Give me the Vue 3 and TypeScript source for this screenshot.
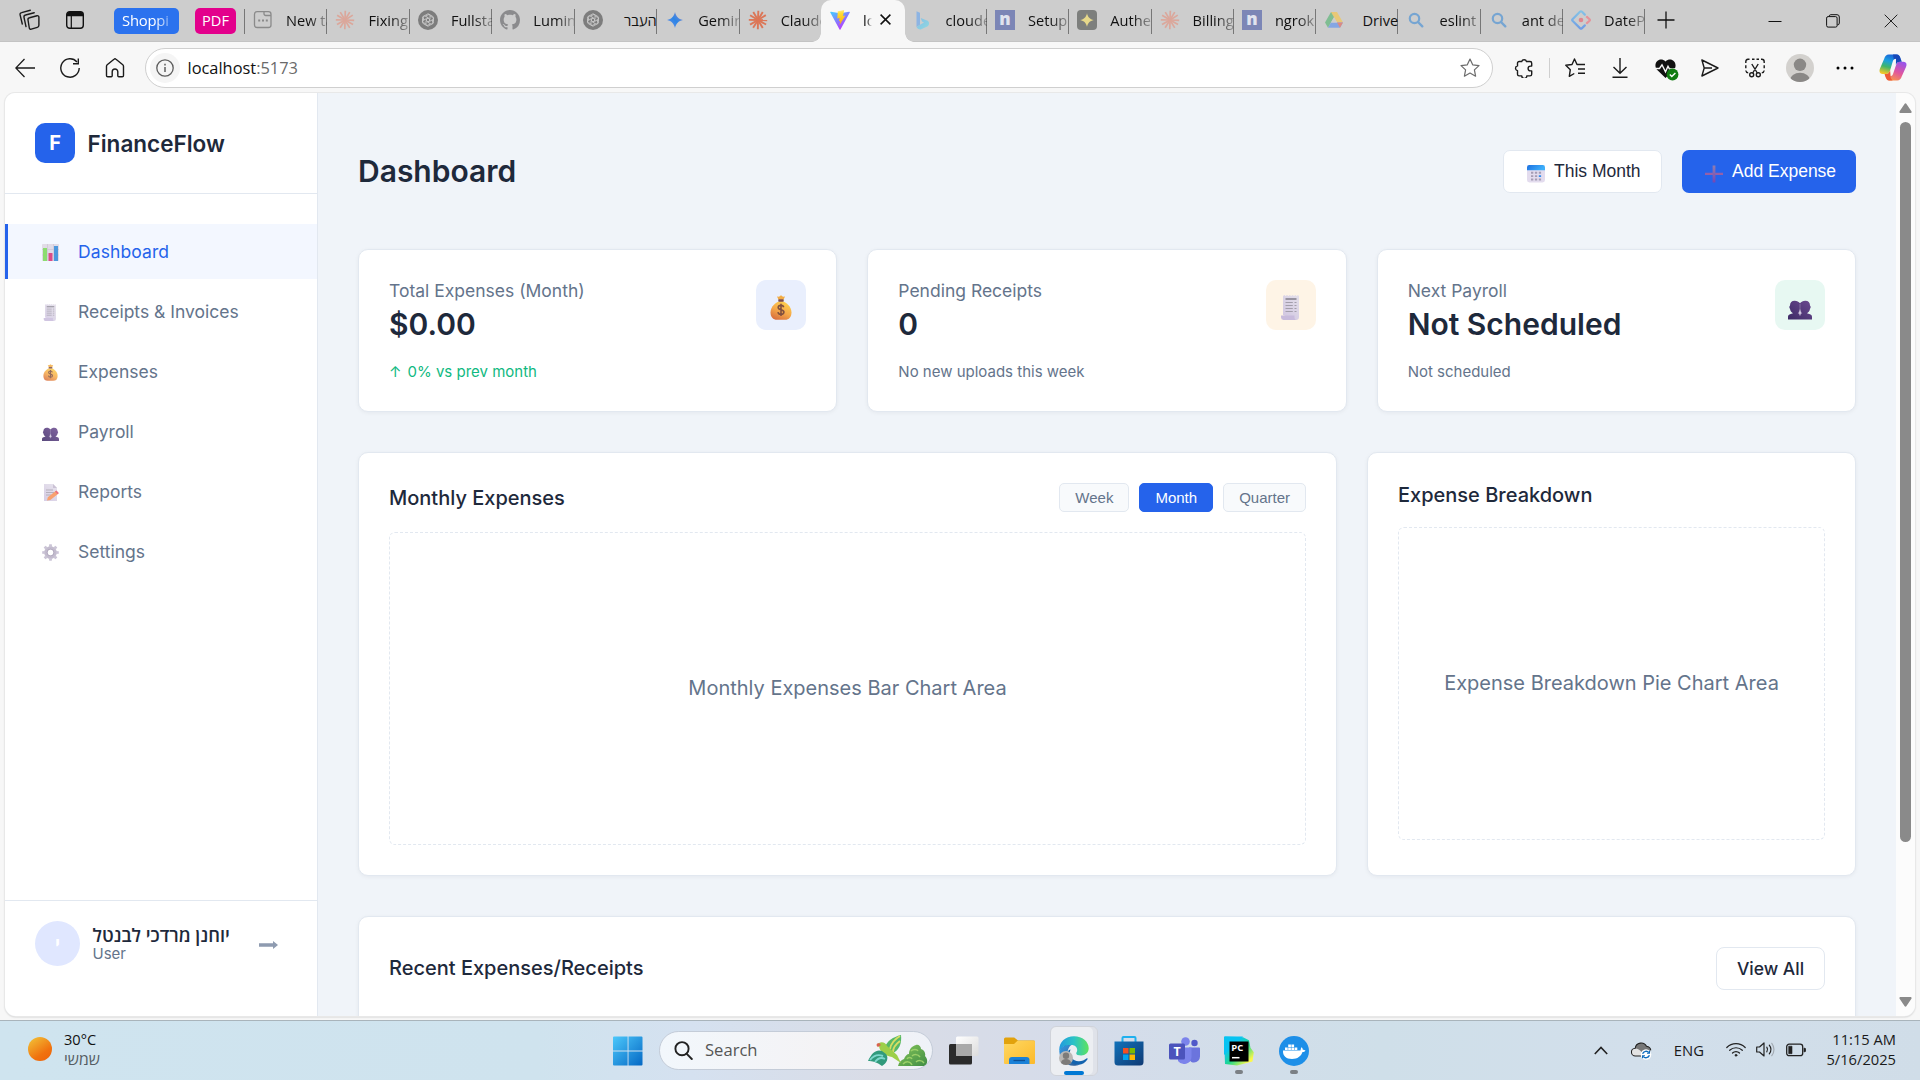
<script setup lang="ts">
interface Tab { icon: string; title: string; rtl?: boolean; active?: boolean }
interface NavItem { icon: string; label: string; active?: boolean }
interface Stat { title: string; value: string; note: string; icon: string; tone: string; up?: boolean }

const tabs: Tab[] = [
  { icon: 'newtab', title: 'New ta' },
  { icon: 'burst-dim', title: 'Fixing' },
  { icon: 'openai', title: 'Fullsta' },
  { icon: 'github', title: 'Lumin' },
  { icon: 'openai', title: 'העבר', rtl: true },
  { icon: 'gemini', title: 'Gemin' },
  { icon: 'burst', title: 'Claude' },
  { icon: 'vite', title: 'lo', active: true },
  { icon: 'bing', title: 'cloude' },
  { icon: 'ngrok', title: 'Setup' },
  { icon: 'auth', title: 'Authe' },
  { icon: 'burst-dim', title: 'Billing' },
  { icon: 'ngrok', title: 'ngrok' },
  { icon: 'drive', title: 'Drive', rtl: true },
  { icon: 'lens', title: 'eslint -' },
  { icon: 'lens', title: 'ant de' },
  { icon: 'antd', title: 'DateP' },
]

const nav: NavItem[] = [
  { icon: 'chart', label: 'Dashboard', active: true },
  { icon: 'receipt', label: 'Receipts & Invoices' },
  { icon: 'bag', label: 'Expenses' },
  { icon: 'people', label: 'Payroll' },
  { icon: 'memo', label: 'Reports' },
  { icon: 'gear', label: 'Settings' },
]

const stats: Stat[] = [
  { title: 'Total Expenses (Month)', value: '$0.00', note: '0% vs prev month', icon: 'bag', tone: 'blue', up: true },
  { title: 'Pending Receipts', value: '0', note: 'No new uploads this week', icon: 'receipt', tone: 'amber' },
  { title: 'Next Payroll', value: 'Not Scheduled', note: 'Not scheduled', icon: 'people', tone: 'green' },
]

const periods = ['Week', 'Month', 'Quarter']
const rays = [2, 31, 58, 92, 119, 149, 181, 212, 240, 271, 301, 329]
const petals = [0, 60, 120, 180, 240, 300]
</script>

<template>
  <svg class="sprite" aria-hidden="true">
    <defs>
      <linearGradient id="gBag" x1="0.8" y1="0" x2="0.3" y2="1"><stop offset="0" stop-color="#ffd54f" /><stop offset="0.55" stop-color="#f5a94a" /><stop offset="1" stop-color="#d9713f" /></linearGradient>
      <linearGradient id="gPeople" x1="1" y1="0" x2="0" y2="1"><stop offset="0" stop-color="#6c4a91" /><stop offset="1" stop-color="#3d2a66" /></linearGradient>
      <linearGradient id="gPaper" x1="1" y1="0" x2="0.3" y2="1"><stop offset="0" stop-color="#e4e0ea" /><stop offset="1" stop-color="#d2c8e2" /></linearGradient>
      <linearGradient id="gCal" x1="0" y1="0" x2="1" y2="0.3"><stop offset="0" stop-color="#1c6fe0" /><stop offset="1" stop-color="#3db0fb" /></linearGradient>
      <linearGradient id="gWin" x1="0" y1="0" x2="1" y2="1"><stop offset="0" stop-color="#4cc8fb" /><stop offset="1" stop-color="#0568c4" /></linearGradient>
      <linearGradient id="gGem" x1="0" y1="1" x2="1" y2="0"><stop offset="0" stop-color="#6f8fe8" /><stop offset="0.5" stop-color="#2c85e6" /><stop offset="1" stop-color="#8f86c9" /></linearGradient>
      <linearGradient id="gViteA" x1="0" y1="0" x2="0.6" y2="1"><stop offset="0" stop-color="#41d1ff" /><stop offset="1" stop-color="#bd34fe" /></linearGradient>
      <linearGradient id="gViteB" x1="0.5" y1="0" x2="0.6" y2="1"><stop offset="0" stop-color="#ffea83" /><stop offset="0.2" stop-color="#ffdd35" /><stop offset="1" stop-color="#ffa800" /></linearGradient>
      <linearGradient id="gBing" x1="0" y1="0" x2="1" y2="1"><stop offset="0" stop-color="#86bfe6" /><stop offset="1" stop-color="#8fd8e0" /></linearGradient>
      <linearGradient id="gAnt" x1="0" y1="0" x2="0" y2="1"><stop offset="0" stop-color="#84c2e6" /><stop offset="1" stop-color="#6f9de4" /></linearGradient>
      <linearGradient id="gPlus" x1="0" y1="0" x2="0" y2="1"><stop offset="0" stop-color="#8f7db0" /><stop offset="1" stop-color="#7446b4" /></linearGradient>
      <linearGradient id="gSun" x1="0.1" y1="0" x2="0.8" y2="1"><stop offset="0" stop-color="#f2c237" /><stop offset="0.7" stop-color="#f0720f" /><stop offset="1" stop-color="#ee650a" /></linearGradient>
      <linearGradient id="gFolder" x1="0" y1="0" x2="1" y2="1"><stop offset="0" stop-color="#ffd862" /><stop offset="1" stop-color="#fcb92a" /></linearGradient>
      <linearGradient id="gEdge1" x1="0" y1="0.4" x2="1" y2="0.4"><stop offset="0" stop-color="#2299de" /><stop offset="0.5" stop-color="#2bc3c6" /><stop offset="1" stop-color="#5fe35e" /></linearGradient>
      <linearGradient id="gEdge2" x1="0" y1="0" x2="1" y2="1"><stop offset="0" stop-color="#1689de" /><stop offset="1" stop-color="#0c3f80" /></linearGradient>
      <linearGradient id="gStore" x1="0" y1="0" x2="1" y2="1"><stop offset="0" stop-color="#1172ba" /><stop offset="1" stop-color="#103a74" /></linearGradient>
      <linearGradient id="gPy" x1="0" y1="0" x2="1" y2="1"><stop offset="0" stop-color="#07c3f2" /><stop offset="0.35" stop-color="#12c9d8" /><stop offset="0.55" stop-color="#21d789" /><stop offset="0.85" stop-color="#fcf84a" /></linearGradient>
      <linearGradient id="gCopA" x1="0.6" y1="0" x2="0.3" y2="1"><stop offset="0" stop-color="#1a62d8" /><stop offset="0.35" stop-color="#1ba0e0" /><stop offset="0.65" stop-color="#3fb66a" /><stop offset="1" stop-color="#f3c62a" /></linearGradient>
      <linearGradient id="gCopB" x1="0.7" y1="0" x2="0.2" y2="1"><stop offset="0" stop-color="#9a55e8" /><stop offset="0.5" stop-color="#e0559f" /><stop offset="1" stop-color="#fb9a45" /></linearGradient>
      <linearGradient id="gTask" x1="0" y1="0" x2="1" y2="1"><stop offset="0" stop-color="#fff" /><stop offset="1" stop-color="#dcdcdc" /></linearGradient>
      <linearGradient id="gGreen" x1="0" y1="0" x2="1" y2="1"><stop offset="0" stop-color="#86c559" /><stop offset="1" stop-color="#3f8d45" /></linearGradient>
    </defs>

    <!-- tab favicons -->
    <symbol id="newtab" viewBox="0 0 20 20"><path d="M11 1.700H4A2.500 2.500 0 0 0 1.500 4.200v10.800A2.500 2.500 0 0 0 4 17.500h11.500a2.500 2.500 0 0 0 2.500-2.500V4.200a2.500 2.500 0 0 0-2.500-2.500H11v2a1.800 1.800 0 0 0 1.800 1.800H18" fill="none" stroke="#8a8a8a" stroke-width="1.300" /><path d="M5.200 10.600h2M9 10.600h2M12.800 10.600h2" stroke="#8a8a8a" stroke-width="2" /></symbol>
    <symbol id="burst-dim" viewBox="0 0 20 20"><path v-for="r in rays" :key="r" d="M10 10V.8" :transform="`rotate(${r} 10 10)`" stroke="#dba79b" stroke-width="1.700" /></symbol>
    <symbol id="burst" viewBox="0 0 20 20"><path v-for="r in rays" :key="r" d="M10 10V.8" :transform="`rotate(${r} 10 10)`" stroke="#dc7657" stroke-width="1.900" /></symbol>
    <symbol id="openai" viewBox="0 0 20 20"><circle cx="10" cy="10" r="10" fill="#7d7d7d" /><g fill="none" stroke="#cfcfcf" stroke-width="0.800"><path v-for="r in petals" :key="r" d="M10 8.200 12 9.300V5.700a1.900 1.900 0 0 0-3.200-1.300L6.400 5.800a1.900 1.900 0 0 0-.9 1.700V10" :transform="`rotate(${r} 10 10)`" /></g></symbol>
    <symbol id="github" viewBox="0 0 16 16"><path fill="#8b8b8d" d="M8 0C3.580 0 0 3.580 0 8c0 3.540 2.290 6.530 5.470 7.590.4.070.55-.17.55-.38 0-.19-.01-.82-.01-1.490-2.010.37-2.530-.49-2.690-.94-.09-.23-.48-.94-.82-1.130-.28-.15-.68-.52-.01-.53.63-.01 1.080.58 1.230.82.72 1.210 1.870.87 2.330.66.07-.52.28-.87.51-1.070-1.780-.2-3.640-.89-3.640-3.950 0-.87.31-1.590.82-2.150-.08-.2-.36-1.020.08-2.120 0 0 .67-.21 2.200.82.64-.18 1.320-.27 2-.27.68 0 1.360.09 2 .27 1.530-1.040 2.200-.82 2.200-.82.44 1.100.16 1.920.08 2.120.51.56.82 1.270.82 2.150 0 3.070-1.870 3.750-3.650 3.950.29.25.54.73.54 1.480 0 1.070-.01 1.930-.01 2.200 0 .21.15.46.55.38A8.012 8.012 0 0 0 16 8c0-4.420-3.580-8-8-8z" /></symbol>
    <symbol id="gemini" viewBox="0 0 20 20"><path d="M10 2c1.200 4.800 3.200 6.800 8 8-4.800 1.200-6.800 3.200-8 8-1.200-4.800-3.200-6.800-8-8 4.800-1.200 6.800-3.200 8-8z" fill="url(#gGem)" /></symbol>
    <symbol id="vite" viewBox="0 0 20 20"><path d="M.3 2.600 9.400 19.200a.7.7 0 0 0 1.200 0L19.800 2.600a.6.6 0 0 0-.7-.9L10 3.300 1 1.700a.6.6 0 0 0-.7.9z" fill="url(#gViteA)" /><path d="M14.200.1 7.800 1.300l-.5 7.200 2.300-.4-.6 3.200 1.300-.4-.9 4.300 6-9.700-2.400.4z" fill="url(#gViteB)" /></symbol>
    <symbol id="bing" viewBox="0 0 20 20"><path d="M3.500 1.200 7 2.700v12l-3.500 2.400z" fill="#8db4e3" /><path d="M3.500 17.100 7 14.700l4-2.200-2-.9-1.300-3.500 7 2.600c2.200 1.800 1.400 4.400 0 5.600l-7 3.100a4 4 0 0 1-4.200-2.300z" fill="url(#gBing)" /></symbol>
    <symbol id="ngrok" viewBox="0 0 20 20"><path d="M0 0h20v20H0z" fill="#7c86b6" /><text x="10" y="15" text-anchor="middle" font-family="Open Sans, sans-serif" font-weight="800" font-size="17" fill="#e0e3ee">n</text></symbol>
    <symbol id="auth" viewBox="0 0 20 20"><rect width="20" height="20" rx="4" fill="#7d7f7d" /><path d="M10 3.200c.9 4 2.800 5.900 6.800 6.800-4 .9-5.900 2.800-6.800 6.800-.9-4-2.800-5.900-6.800-6.800 4-.9 5.900-2.800 6.800-6.800z" fill="#e6d88a" /></symbol>
    <symbol id="drive" viewBox="0 0 20 20"><path d="M7 2h6l-6 10.600-3 5.100L1 12.600z" fill="#7fbd92" /><path d="M7 2h6l6 10.600h-6z" fill="#e8c877" /><path d="M7 12.600h12l-3 5.100H4z" fill="#84a6e3" /><path d="M13 12.600h6l-3 5.100z" fill="#dc8a83" /><path d="M10 7.300 13.100 12.600H6.900z" fill="#cdcdcd" /></symbol>
    <symbol id="lens" viewBox="0 0 20 20"><circle cx="8.500" cy="8.500" r="4.700" fill="none" stroke="#76a5d2" stroke-width="2.200" /><path d="m12 12 4.300 4.300" stroke="#76a5d2" stroke-width="2.400" stroke-linecap="round" /></symbol>
    <symbol id="antd" viewBox="0 0 20 20"><path d="m13.800 4.600-3-3a1.100 1.100 0 0 0-1.600 0L1.500 9.300a1 1 0 0 0 0 1.400l7.700 7.700c.5.400 1.100.4 1.600 0l3-3" fill="none" stroke="url(#gAnt)" stroke-width="2.200" stroke-linecap="round" /><path d="m15.900 6.900 2.600 2.400a1 1 0 0 1 0 1.400l-2.600 2.400" fill="none" stroke="#e5949b" stroke-width="2.200" stroke-linecap="round" /><circle cx="10" cy="10" r="2.300" fill="#e0868f" /></symbol>

    <!-- page emblems -->
    <symbol id="chart" viewBox="0 0 17 17"><rect width="17" height="17" rx=".8" fill="#ddd7e3" /><path d="M0 5.500h17M0 11h17M5.500 0v17M11.500 0v17" stroke="#c5bdce" stroke-width=".7" /><path d="M1 4h4v13H1z" fill="#79d958" /><path d="M6.500 9h4v8h-4z" fill="#d92e73" /><path d="M12 2h4v15h-4z" fill="#2f88d8" /></symbol>
    <symbol id="receipt" viewBox="0 0 22 25"><path d="M3 1l1.400-1 1.200 1 1.400-1L8.400 1l1.400-1 1.400 1 1.400-1L14 1l1.400-1 1.200 1L18 0l1 1v21a3 3 0 0 1-3 3L3 20z" fill="url(#gPaper)" /><path d="M1 20.500h13.500c-.3 2.500.2 4 2 4.500H3.500A2.700 2.700 0 0 1 1 22.300z" fill="#c8bbdc" /><path d="M5.500 4h11" stroke="#8c8794" stroke-width="1.700" /><path d="M5.500 7.500h7.300M14.500 7.500h2M5.500 10.500h7.300M14.500 10.500h2M5.500 13.500h7.300M14.500 13.500h2M5.500 16.500h7.300M14.500 16.500h2" stroke="#a39eab" stroke-width="1.200" /></symbol>
    <symbol id="bag" viewBox="0 0 22 25"><path d="M7 1.500 9 1.700 11 .2l2 1.500 2-.2-1.500 3.200h-5z" fill="#f2ac45" /><path d="M11 6C5.500 6.500.5 12 .5 17.500.5 22 3 24.800 7 24.800h8c4 0 6.500-2.800 6.500-7.300C21.500 12 16.500 6.500 11 6z" fill="url(#gBag)" /><rect x="8.300" y="4.300" width="5.400" height="2.400" rx=".6" fill="#7c4b4b" /><path d="M13.700 12.200c-.3-1.300-1.400-1.800-2.700-1.800-1.600 0-2.800.8-2.800 2.200 0 3.200 5.700 1.300 5.700 4.500 0 1.500-1.300 2.300-2.900 2.300s-2.800-.8-3-2.200M11 8.800v12.300" fill="none" stroke="#80503f" stroke-width="1.600" /></symbol>
    <symbol id="people" viewBox="0 0 24 24"><path d="M2 10c0-3 1.700-4.800 4.700-4.800 2.400 0 4 .9 5.300 2.600 1.300-1.700 2.900-2.600 5.300-2.600C20.300 5.200 22 7 22 10l.8 1.500-.9 2.300c-.5 2.200-1.500 3.200-2.900 4l3 .9c1.400.5 2 1.400 2 2.800V24H0v-2.500c0-1.400.6-2.300 2-2.800l3-.9c-1.400-.8-2.400-1.800-2.900-4l-.9-2.300z" fill="url(#gPeople)" /><path d="M12 8.500v5.300c-.4 1.900-.9 3-1.700 4 .9.400 1.700 1.200 1.700 2.300 0-1.100.8-1.900 1.700-2.300-.8-1-1.300-2.100-1.700-4" fill="#cfc5df" stroke="#e9e3f2" stroke-width=".3" /></symbol>
    <symbol id="memo" viewBox="0 0 17 17"><path d="M2 0h9l4 4v13H2z" fill="url(#gPaper)" /><path d="m11 0 4 4h-4z" fill="#c2b8ce" /><path d="M4 6h7M4 8.500h8M4 11h5" stroke="#aaa3b1" stroke-width="1" /><path d="m5 16.500.8-3.300L14 6.800l2.600 2.800-8.300 6.300z" fill="#f79156" /><path d="m13 7.600 1.500-1.200 2.400 2.700-1.400 1.200z" fill="#e8586b" /></symbol>
    <symbol id="gear" viewBox="0 0 17 17"><circle cx="8.500" cy="8.500" r="4.600" fill="none" stroke="#b9b1c6" stroke-width="3.400" /><path v-for="r in [0, 45, 90, 135, 180, 225, 270, 315]" :key="r" d="M6.900 3 7.200.2h2.600L10.100 3z" :transform="`rotate(${r} 8.500 8.500)`" fill="#c3bbd0" /><circle cx="8.500" cy="8.500" r="3.400" fill="none" stroke="#9f96ae" stroke-width=".8" /></symbol>
    <symbol id="calendar" viewBox="0 0 18 18"><rect width="18" height="17.500" rx="2.400" fill="#e3dcee" /><path d="M0 5.200V2.400A2.400 2.400 0 0 1 2.400 0h13.200A2.400 2.400 0 0 1 18 2.400v2.800z" fill="url(#gCal)" /><path d="M4 7.800h2.300M7.900 7.800h2.300M11.800 7.800h2.300M4 11.100h2.300M7.900 11.100h2.300M4 14.500h2.300M7.900 14.500h2.300M11.800 14.500h2.300" stroke="#a59db4" stroke-width="1.900" /><path d="M11.800 11.100h2.300" stroke="#2e8cf0" stroke-width="1.900" /></symbol>
    <symbol id="parrot" viewBox="0 0 60 33"><path d="M30 32c1-4 3-6 6-7 1-3 3-5 5-5 0-5 3-8 7-9 2-1 5 1 5 4 3 1 5 4 4 7 4 4 2 10-2 10z" fill="url(#gGreen)" /><path d="M35 30c3-3 7-3 9 1M44 22c2-2 6-2 8 1M48 28c2-2 6-2 8 1M43 17c2-2 6-2 7 0M39 25c1-2 4-2 5 0" stroke="#9bd069" stroke-width="1.500" fill="none" /><path d="M33 1c-8 2-14 6-16 12l8 6c6-3 9-9 8-18z" fill="#56b866" /><path d="M32 2c-5 3-9 7-10 13M32 7c-4 3-7 6-7 11" stroke="#d6dd62" stroke-width="1.900" fill="none" /><path d="M11 9c3-2 7 0 8 3l10 9 4 8-9-6c-6-1-12-4-13-11z" fill="#9dcf48" /><path d="M11 9c-3 0-3 3-1 4l3-2z" fill="#d8634d" /><path d="M14 17C9 15 4 18 0 27c4 0 9 1 14 5 5-3 7-8 4-12z" fill="#319a7c" /><path d="M2 26c4-5 8-6 13-4M7 28c3-4 6-5 10-3" stroke="#7ed7cd" stroke-width="1.900" fill="none" /></symbol>
  </svg>

  <div class="screen">
    <header class="tabstrip">
      <svg class="ws" width="22" height="22" viewBox="0 0 22 22" fill="none" stroke="#1b1b1b" stroke-width="1.400" stroke-linejoin="round" stroke-linecap="round"><path d="m11.500 8.700 7.500-2a1.500 1.500 0 0 1 1.900 1.500v8a2.200 2.200 0 0 1-1.600 2.100l-6 1.900A1.500 1.500 0 0 1 11.300 19L10 11a2 2 0 0 1 1.500-2.300z" /><path d="m8 17.600-2-9.300A2 2 0 0 1 7.500 6l8.700-2.300M4.300 15 2.100 5.900a2 2 0 0 1 1.500-2.300l8.700-2.300" /></svg>
      <svg class="ta" width="18" height="18" viewBox="0 0 18 18"><rect x=".7" y=".7" width="16.600" height="16.600" rx="3" fill="none" stroke="#111" stroke-width="1.400" /><path d="M1 5.200V3a2 2 0 0 1 2-2h12a2 2 0 0 1 2 2v2.200z" fill="#111" /><path d="M5.300 5v12" stroke="#111" stroke-width="1.200" /></svg>
      <span class="group shopping"><span>Shoppi</span></span>
      <span class="group pdf">PDF</span>
      <div class="tabs">
        <div v-for="(t, i) in tabs" :key="i" class="tab" :class="{ active: t.active, rtl: t.rtl, nosep: i === 6, tight: i > 8 }">
          <svg width="20" height="20"><use :href="'#' + t.icon" /></svg>
          <span class="title">{{ t.title }}</span>
          <svg v-if="t.active" class="x" width="11" height="11" viewBox="0 0 11 11"><path d="m.6.6 9.800 9.800M10.400.6.6 10.400" stroke="#111" stroke-width="1.500" /></svg>
        </div>
      </div>
      <svg class="plus" width="18" height="18" viewBox="0 0 18 18"><path d="M9 .5v17M.5 9h17" stroke="#111" stroke-width="1.300" /></svg>
      <div class="winctl">
        <svg width="14" height="14" viewBox="0 0 14 14"><path d="M.5 7.500h13" stroke="#111" /></svg>
        <svg width="14" height="14" viewBox="0 0 14 14" fill="none" stroke="#111"><rect x=".6" y="2.600" width="10.500" height="10.500" rx="1.500" /><path d="M3 2.500A2 2 0 0 1 4.800.7H11A2.300 2.300 0 0 1 13.300 3v6a2 2 0 0 1-2 2" /></svg>
        <svg width="14" height="14" viewBox="0 0 14 14"><path d="m.7.700 12.600 12.600M13.300.7.700 13.300" stroke="#222" /></svg>
      </div>
    </header>

    <div class="toolbar">
      <svg class="back" width="20" height="20" viewBox="0 0 20 20" fill="none" stroke="#1b1b1b" stroke-width="1.300"><path d="M9.500 1 .8 10l8.700 9M1 10h19" /></svg>
      <svg class="reload" width="20" height="20" viewBox="0 0 20 20" fill="none" stroke="#1b1b1b" stroke-width="1.400"><path d="M19.200 10A9.200 9.200 0 1 1 17 4" /><path d="M18.300.5v5.300H13" /></svg>
      <svg class="home" width="20" height="20" viewBox="0 0 20 20" fill="none" stroke="#1b1b1b" stroke-width="1.400" stroke-linejoin="round"><path d="M1.500 8.400a2 2 0 0 1 .7-1.600L9 1.200a1.500 1.500 0 0 1 2 0l6.800 5.600a2 2 0 0 1 .7 1.600v9.100a1.300 1.300 0 0 1-1.300 1.300h-3.400a1 1 0 0 1-1-1v-4a2.800 2.800 0 0 0-5.600 0v4a1 1 0 0 1-1 1H2.800a1.300 1.300 0 0 1-1.300-1.300z" /></svg>
      <div class="address">
        <span class="info"><svg width="18" height="18" viewBox="0 0 18 18" fill="none" stroke="#5d5d5d" stroke-width="1.300"><circle cx="9" cy="9" r="8.200" /><path d="M9 8v5M9 4.800v1.600" stroke-width="1.500" /></svg></span>
        <span class="url">localhost<em>:5173</em></span>
        <svg class="star" width="20" height="20" viewBox="0 0 20 20" fill="none" stroke="#6b6b6b" stroke-width="1.200" stroke-linejoin="round"><path d="m10 1 2.700 5.800 6.300.8-4.600 4.300 1.200 6.300L10 15.100l-5.600 3.100 1.200-6.300L1 7.600l6.300-.8z" /></svg>
      </div>
      <svg class="puzzle" width="20" height="20" viewBox="0 0 20 20" fill="none" stroke="#1b1b1b" stroke-width="1.400" stroke-linejoin="round"><path d="M5.200 3.500h2.500a2.500 2.500 0 0 1 4.800 0H16a1.700 1.700 0 0 1 1.700 1.700v2.900h-1.200a2.400 2.400 0 0 0 0 4.800h1.200v3.300a1.700 1.700 0 0 1-1.700 1.700h-3.200a2.500 2.500 0 0 1-5 0H5.200a1.700 1.700 0 0 1-1.700-1.700v-3.400a2.500 2.500 0 0 1 0-4.900V5.200A1.700 1.700 0 0 1 5.200 3.500z" /></svg>
      <i class="divider"></i>
      <svg class="favs" width="20" height="20" viewBox="0 0 20 20" fill="none" stroke="#1b1b1b" stroke-width="1.400" stroke-linejoin="round"><path d="M12.500 6.500H12L9.500 1 7 6.500l-6.200.8 4.500 4.400-1 6.700 5-2.900M12 6.500h8M13 11h7M13 15.300h7" /></svg>
      <svg class="down" width="16" height="20" viewBox="0 0 16 20" fill="none" stroke="#1b1b1b" stroke-width="1.400"><path d="M8 0v15M1.500 9 8 15.300 14.500 9M.5 19.200h15" /></svg>
      <svg class="heart" width="24" height="22" viewBox="0 0 24 22"><path d="M10.500 19 2 10.800C-3 4 5-3 10.500 2.600 16-3 24 4 19 10.800z" fill="#111" /><path d="M0 9.500h4.500L7 5.800l3.500 7 2.500-5.500 1.500 2.700H21" fill="none" stroke="#f7f7f7" stroke-width="1.400" /><circle cx="17.500" cy="15.500" r="5.900" fill="#107c10" /><path d="m14.800 15.600 2 2 3.600-3.600" stroke="#fff" stroke-width="1.400" fill="none" /></svg>
      <svg class="send" width="18" height="18" viewBox="0 0 18 18" fill="none" stroke="#1b1b1b" stroke-width="1.400" stroke-linejoin="round"><path d="M.9 1 17 9 .9 17l2.300-8zM3.200 9H11" /></svg>
      <svg class="snip" width="20" height="20" viewBox="0 0 20 20" fill="none" stroke="#1b1b1b" stroke-width="1.400"><path d="M.8 5V3.800A2.500 2.500 0 0 1 3 1.300h1.500M7 1.300h2.500M11.500 1.300H14M16 1.300h.8a2.400 2.400 0 0 1 2.400 2.400V5M19.200 7.300v3M.8 7.300v3M.8 12.500c.2 1.400 1 2.200 2.400 2.300M19.200 12.500c-.2 1.400-1 2.200-2.400 2.300M6.800 6l5.500 9M13.200 6l-5.500 9" /><circle cx="6.700" cy="16.700" r="2" /><circle cx="13.300" cy="16.700" r="2" /></svg>
      <svg class="profile" width="28" height="28" viewBox="0 0 28 28"><defs><clipPath id="av"><circle cx="14" cy="14" r="14" /></clipPath></defs><g clip-path="url(#av)"><path d="M0 0h28v28H0z" fill="#d3d1ce" /><circle cx="14" cy="10.800" r="6.200" fill="#8a8886" /><ellipse cx="14" cy="26" rx="10" ry="7.200" fill="#8a8886" /></g></svg>
      <svg class="dots" width="18" height="4" viewBox="0 0 18 4"><circle cx="2" cy="2" r="1.500" /><circle cx="9" cy="2" r="1.500" /><circle cx="16" cy="2" r="1.500" /></svg>
      <svg class="copilot" width="28" height="27" viewBox="0 0 28 27"><path d="M17.500.6H9.800C7.300.6 6 2.300 5.200 4.800L1 14.500c-1.400 3.700.3 5.400 2.700 5.400h3.500c2.300 0 3.300-1.700 4-4l2.700-8.800c.6-1.800 1.700-2.300 3.300-2.300h4.300c-.7-2.300-1.500-4.200-4-4.200z" fill="url(#gCopA)" /><path d="M10.500 26.400h7.700c2.500 0 3.800-1.700 4.600-4.200L27 13c1.400-3.700-.3-5.200-2.700-5.200h-3.500c-2.300 0-3.300 1.700-4 4l-2.700 8c-.6 1.800-1.700 2.500-3.300 2.500H6.700c.7 2.300 1.500 4.100 3.800 4.100z" fill="url(#gCopB)" /><path d="M14 .6h3.500c2.500 0 3.400 1.700 4.200 4.200l1.100 3c-3.800-.3-4.900.4-5.900 3.200L17 4.800c-1-.2-1.600 0-2.200.7z" fill="#1748b8" /><path d="M5.600 19.900h1.700c2 0 3-1.500 3.800-4l.5 6.400c-.5.600.5 2.600 2 4.100h-3.300c-2.300 0-3.500-1.800-4.700-6.500z" fill="#ee5a38" /></svg>
    </div>

    <div class="viewport">
      <div class="page">
        <aside class="sidebar">
          <div class="brand"><span class="logo">F</span><span class="name">FinanceFlow</span></div>
          <nav>
            <a v-for="n in nav" :key="n.label" :class="{ on: n.active }"><svg width="17" height="17"><use :href="'#' + n.icon" /></svg>{{ n.label }}</a>
          </nav>
          <div class="user">
            <span class="avatar">י</span>
            <div class="who"><b dir="rtl">יוחנן מרדכי לבנטל</b><small>User</small></div>
            <svg width="19" height="8" viewBox="0 0 19 8"><path d="M0 2.300h14V0l5 4-5 4V5.700H0z" fill="#8e9bb0" /></svg>
          </div>
        </aside>
        <main>
          <div class="head">
            <h1>Dashboard</h1>
            <button class="btn month"><svg width="18" height="18"><use href="#calendar" /></svg>This Month</button>
            <button class="btn add"><svg width="18" height="18" viewBox="0 0 18 18"><path d="M0 7.700h18v2.300H0z" fill="#9560a8" /><path d="M7.600.5h2.800v17H7.600z" fill="url(#gPlus)" /></svg>Add Expense</button>
          </div>
          <section class="stats">
            <article v-for="s in stats" :key="s.title" class="card stat">
              <div>
                <h3>{{ s.title }}</h3>
                <strong>{{ s.value }}</strong>
                <p :class="{ up: s.up }"><span v-if="s.up" class="arrow">↑</span>{{ s.note }}</p>
              </div>
              <span class="badge" :class="s.tone"><svg width="24" height="25"><use :href="'#' + s.icon" /></svg></span>
            </article>
          </section>
          <section class="charts">
            <article class="card wide">
              <div class="charthead">
                <h2>Monthly Expenses</h2>
                <div class="periods"><button v-for="p in periods" :key="p" :class="{ on: p === 'Month' }">{{ p }}</button></div>
              </div>
              <div class="area">Monthly Expenses Bar Chart Area</div>
            </article>
            <article class="card narrow">
              <h2>Expense Breakdown</h2>
              <div class="area">Expense Breakdown Pie Chart Area</div>
            </article>
          </section>
          <section class="card recent">
            <h2>Recent Expenses/Receipts</h2>
            <button class="viewall">View All</button>
          </section>
        </main>
        <div class="scroll">
          <svg width="13" height="10" viewBox="0 0 13 10"><path d="M5.500 1a1.200 1.200 0 0 1 2 0l4.900 7.300a1 1 0 0 1-.9 1.600H1.500a1 1 0 0 1-.9-1.600z" fill="#8a8a8a" /></svg>
          <i></i>
          <svg class="dn" width="13" height="10" viewBox="0 0 13 10"><path d="M5.500 1a1.200 1.200 0 0 1 2 0l4.900 7.300a1 1 0 0 1-.9 1.600H1.500a1 1 0 0 1-.9-1.600z" fill="#8a8a8a" /></svg>
        </div>
      </div>
    </div>

    <footer class="taskbar">
      <div class="weather">
        <svg width="24" height="24"><circle cx="12" cy="12" r="12" fill="url(#gSun)" /></svg>
        <div><span>30°C</span><span class="sub">שמשי</span></div>
      </div>
      <svg class="start" width="30" height="30" viewBox="0 0 30 30" fill="url(#gWin)"><path d="M1 .5h13.600v14H0V1.500a1 1 0 0 1 1-1zM15.500.500H28.500a1 1 0 0 1 1 1v13h-14zM0 15.500h14.600v14H1a1 1 0 0 1-1-1zM15.500 15.500h14v13a1 1 0 0 1-1 1h-13z" /></svg>
      <div class="search">
        <svg class="mag" width="19" height="19" viewBox="0 0 19 19" fill="none" stroke="#222" stroke-width="1.900"><circle cx="8" cy="7.700" r="6.600" /><path d="m12.500 12.700 5.300 5.300" stroke-linecap="round" /></svg>
        <span>Search</span>
        <svg class="bird" width="60" height="33"><use href="#parrot" /></svg>
      </div>
      <svg class="tv" width="30" height="29" viewBox="0 0 30 29"><rect y="8" width="23" height="20.500" rx="1.500" fill="#2b2b2b" /><rect x="7" y=".5" width="22.500" height="19.500" rx="1.500" fill="url(#gTask)" /><path d="M7 8h16v12H8.500A1.500 1.500 0 0 1 7 18.500z" fill="#a9a9a9" /></svg>
      <svg class="fold" width="31" height="28" viewBox="0 0 31 28"><path d="M0 2A1.500 1.500 0 0 1 1.500.5h8.700L14 3.500h15.500A1.500 1.500 0 0 1 31 5v8H0z" fill="#e2a20c" /><path d="M0 7h10l3.500-3.300H30a1 1 0 0 1 1 1V26a1 1 0 0 1-1 1H1a1 1 0 0 1-1-1z" fill="url(#gFolder)" /><path d="M5 27v-4a3 3 0 0 1 3-3h14.500a3 3 0 0 1 3 3v4z" fill="#1a81d8" /><path d="M9.500 23.500h11.500" stroke="#0d4f94" stroke-width="1.300" /></svg>
      <div class="edge">
        <svg width="30" height="30" viewBox="0 0 30 30"><path d="M.3 15.500C-.5 6.500 6 .3 15 .3c8.500 0 14.700 5.500 14.700 12 0 4.500-3.400 7.200-7.500 7.200-3.200 0-5-1-5-2.300 0-.8 1-1.400 1-3.300 0-2.700-2.300-5-5.500-5C7 8.900 1.500 11 .3 15.500z" fill="url(#gEdge1)" /><path d="M.3 15.500C1.500 10.500 6.500 8.700 12.500 8.900c-2 1-4 4-4 8 0 6 5 11.500 12 11.500-2 1-4 1.300-6 1.300C7 29.700.8 24 .3 15.500z" fill="url(#gEdge2)" opacity=".85" /><path d="M11.500 13.500c-3 7 3 12 8.500 11.700 3 0 5.500-1.200 7.500-2.700.8-.4 1.400.2.9 1-2 3-5 5-8.500 5.300C12 29 6 23 8.600 16c.6-1.600 1.700-2.500 2.900-2.500z" fill="#1363ae" /><circle cx="7" cy="22" r="7" fill="#b9b7b5" /><circle cx="7" cy="19.700" r="3.200" fill="#7d7b79" /><path d="M2 27c.3-3 2.300-4 5-4s4.700 1 5 4a7 7 0 0 1-10 0z" fill="#7d7b79" /></svg>
        <i></i>
      </div>
      <svg class="store" width="30" height="30" viewBox="0 0 30 30"><path d="M8.500 7V2a1 1 0 0 1 1-1h11a1 1 0 0 1 1 1v5" fill="none" stroke="#1fb0ee" stroke-width="2" /><path d="M.5 5.500h29V26a3.500 3.500 0 0 1-3.500 3.500H4A3.500 3.500 0 0 1 .5 26z" fill="url(#gStore)" /><path d="M9 12h5.500v5.500H9z" fill="#f25022" /><path d="M15.500 12H21v5.500h-5.500z" fill="#7fba00" /><path d="M9 18.500h5.500V24H9z" fill="#00a4ef" /><path d="M15.500 18.500H21V24h-5.500z" fill="#ffb900" /></svg>
      <svg class="teams" width="31" height="28" viewBox="0 0 31 28"><circle cx="16.500" cy="4.500" r="4.300" fill="#7b83eb" /><circle cx="25.500" cy="6" r="3.200" fill="#5059c9" /><path d="M20 10.500h10a1 1 0 0 1 1 1v8a6 6 0 0 1-6 6c-3 0-5-2-5-6z" fill="#6b74dd" /><path d="M9 10.500h13.500V20a7.500 7.500 0 0 1-13.500 4z" fill="#7b83eb" /><rect y="6.500" width="16" height="16" rx="1.500" fill="#4b53bc" /><text x="8" y="19" text-anchor="middle" font-family="Open Sans, sans-serif" font-weight="700" font-size="12.500" fill="#fff">T</text></svg>
      <div class="app"><svg width="30" height="30" viewBox="0 0 30 30"><path d="M0 1.500A1 1 0 0 1 1 .5l18 .8 6 3 1.500 7.500 3.300 4.500-1.300 9.200L13 29.500 1 28z" fill="url(#gPy)" /><path d="M0 1.500A1 1 0 0 1 1 .5h18L0 19z" fill="#07c3f2" /><path d="M5.500 5.500h19v20h-19z" fill="#000" /><text x="7.300" y="15" font-family="Open Sans, sans-serif" font-weight="700" font-size="9.500" fill="#fff">PC</text><path d="M8 21.700h7.500" stroke="#fff" stroke-width="1.500" /></svg><i></i></div>
      <div class="app docker"><svg width="30" height="30" viewBox="0 0 30 30"><circle cx="15" cy="15" r="15" fill="#1d8fe8" /><path d="M4 14.500h17.500c.3-1 .2-2 1-3.200 1 .7 1.300 1.600 1.300 2.400 1 0 2 .1 2.700.8-.7 1-1.700 1.600-3 1.600C22 20.500 18.500 23 13 23c-6 0-9.300-3-9-8.500zM6 11.500h2.700v2.500H6zM9.200 11.500h2.700v2.500H9.200zM12.400 11.500h2.700v2.500h-2.700zM15.600 11.500h2.700v2.500h-2.700zM9.200 8.500h2.700V11H9.200zM12.400 8.500h2.700V11h-2.700z" fill="#fff" /></svg><i></i></div>
      <div class="tray">
        <svg class="chev" width="14" height="9" viewBox="0 0 14 9"><path d="M.8 8 7 1.500 13.200 8" fill="none" stroke="#222" stroke-width="1.600" /></svg>
        <svg class="cloud" width="21" height="18" viewBox="0 0 21 18"><path d="M5 14a4 4 0 0 1-.8-7.800A6 6 0 0 1 15.500 4.300 4.800 4.800 0 0 1 19.500 9L12 14z" fill="#777" /><path d="M4.500 14a3.700 3.700 0 0 1 0-7.500c2 0 4.500 1.500 6.500 4l1 3.500z" fill="#e3e3e3" /><path d="M10 14H4.500a3.900 3.900 0 0 1-.3-7.800 6 6 0 0 1 11.300-1.900c2.300.3 4 1.800 4.300 4" fill="none" stroke="#222" stroke-width="1.100" /><circle cx="15" cy="12.500" r="5.300" fill="#fff" /><path d="M11.600 11.700a3.600 3.600 0 0 1 6.300-1M18.400 13.300a3.600 3.600 0 0 1-6.300 1" stroke="#0f6cbd" stroke-width="1.300" fill="none" /><path d="M18.500 8.800v2.500H16M11.500 16.200v-2.500H14" stroke="#0f6cbd" stroke-width="1.100" fill="none" /></svg>
        <span class="eng">ENG</span>
        <svg class="wifi" width="20" height="15" viewBox="0 0 20 15" fill="none" stroke="#222" stroke-width="1.200" stroke-linecap="round"><path d="M.8 5.500a13 13 0 0 1 18.400 0M3.700 8.300a9 9 0 0 1 12.600 0M6.500 11a5 5 0 0 1 7 0" /><circle cx="10" cy="13.300" r="1" fill="#222" stroke-width=".6" /></svg>
        <svg class="vol" width="20" height="15" viewBox="0 0 20 15" fill="none" stroke="#222" stroke-width="1.200" stroke-linecap="round" stroke-linejoin="round"><path d="M.7 5h2.800L8 1v13l-4.500-4H.7zM10.800 5.200a4 4 0 0 1 0 4.600M13.300 3.200a7 7 0 0 1 0 8.600" /><path d="M15.800 1.300a10 10 0 0 1 0 12.400" stroke="#a4abb3" /></svg>
        <svg class="bat" width="20" height="14" viewBox="0 0 20 14"><rect x=".7" y="1.200" width="16" height="11.500" rx="2.500" fill="none" stroke="#222" stroke-width="1.300" /><path d="M2.700 3.200h3.300v7.500H2.700zM18 5a2 2 0 0 1 0 4z" fill="#222" stroke="#222" stroke-width=".6" /></svg>
        <div class="clock"><span>11:15 AM</span><span>5/16/2025</span></div>
      </div>
    </footer>
  </div>
</template>

<style>
body { margin: 0; overflow: hidden; }
</style>

<style scoped>
* { box-sizing: border-box; margin: 0; }
svg { display: block; flex: none; }
.sprite { position: absolute; width: 0; height: 0; }
.screen { width: 1920px; height: 1080px; display: flex; flex-direction: column; background: #f7f7f7; overflow: hidden; font-family: 'Open Sans', sans-serif; color: #111; }

.tabstrip { height: 42px; flex: none; display: flex; align-items: center; background: #cdcdcd; box-shadow: inset 0 -1px #c3c3c3; }
.ws { margin: 0 0 3px 18px; }
.ta { margin: 0 0 2px 26px; }
.group { height: 26px; border-radius: 5px; color: #fff; font-size: 14.600px; line-height: 24px; }
.shopping { width: 65px; margin-left: 30px; padding-left: 8px; background: #2b72ee; }
.shopping span { display: block; width: 51px; white-space: nowrap; font-size: 14.800px; letter-spacing: -.2px; -webkit-mask: linear-gradient(90deg, #000 65%, rgba(0,0,0,.2)); mask: linear-gradient(90deg, #000 65%, rgba(0,0,0,.2)); }
.pdf { width: 41px; margin-left: 16px; background: #e3008c; text-align: center; }
.tabs { display: flex; height: 42px; margin-left: 8px; border-left: 1px solid transparent; background: linear-gradient(#777, #777) 0 9px / 1px 25px no-repeat border-box; }
.tab { position: relative; width: 82.450px; height: 42px; display: flex; align-items: center; padding: 0 0 3px 8px; background: linear-gradient(#777, #777) right 9px / 1px 25px no-repeat; }
.tab.tight { width: 82.300px; }
.tab.nosep { background: none; }
.title { width: 41px; margin-left: 13px; font-size: 14.600px; line-height: 20px; white-space: nowrap; overflow: hidden; -webkit-mask: linear-gradient(90deg, #000 55%, rgba(0,0,0,.25)); mask: linear-gradient(90deg, #000 55%, rgba(0,0,0,.25)); }
.rtl .title { text-align: right; -webkit-mask: none; mask: none; }
.tab.active { width: 84px; margin: 0 -.5px 0 -1px; padding-left: 9px; background: #f7f7f7; border-radius: 10px 10px 0 0; z-index: 1; }
.active::before, .active::after { content: ''; position: absolute; bottom: 0; width: 9px; height: 9px; }
.active::before { left: -9px; background: radial-gradient(circle at 0 0, transparent 8.500px, #f7f7f7 9px); }
.active::after { right: -9px; background: radial-gradient(circle at 100% 0, transparent 8.500px, #f7f7f7 9px); }
.active .title { width: 9px; -webkit-mask: linear-gradient(90deg, #000 40%, transparent); mask: linear-gradient(90deg, #000 40%, transparent); }
.active .x { margin-left: 8px; }
.plus { margin: 0 0 3px 12px; }
.winctl { display: flex; gap: 44px; margin-left: auto; margin-right: 22px; }

.toolbar { height: 51px; flex: none; display: flex; align-items: center; background: #f7f7f7; }
.back { margin-left: 15px; }
.reload { margin-left: 25px; }
.home { margin-left: 25px; }
.address { width: 1348px; height: 40px; margin-left: 20px; display: flex; align-items: center; padding-left: 4px; border: 1px solid #cfcfcf; border-radius: 20px; background: #fff; }
.info { width: 30px; height: 30px; border-radius: 50%; background: #f5f5f5; display: flex; align-items: center; justify-content: center; }
.url { margin-left: 7.500px; font-size: 16.400px; line-height: 22px; margin-top: 0; color: #111; }
.url em { font-style: normal; color: #6a6a6a; }
.star { margin-left: auto; margin-right: 12px; }
.puzzle { margin-left: 21px; }
.divider { width: 1px; height: 20px; margin-left: 15px; background: #cfcfcf; }
.favs { margin-left: 15px; }
.down { margin-left: 27px; }
.heart { margin-left: 27px; margin-top: 4px; }
.send { margin-left: 22px; }
.snip { margin-left: 26px; }
.profile { margin-left: 21px; }
.dots { margin-left: 22px; }
.copilot { margin-left: 25px; }

.viewport { height: 927px; flex: none; padding: 0 5px 4px; }
.page { height: 923px; display: flex; border-radius: 10px 10px 11px 11px; overflow: hidden; background: #f0f4f9; box-shadow: 0 0 0 1px #e8e8e8, 0 1px 2px rgba(0, 0, 0, .25); font-family: Inter, sans-serif; color: #1e293b; }

.sidebar { width: 313px; flex: none; display: flex; flex-direction: column; background: #fff; border-right: 1px solid #e2e8f0; }
.brand { height: 101px; display: flex; align-items: center; gap: 12.500px; padding: 0 0 1px 30px; border-bottom: 1px solid #e2e8f0; font-size: 22.500px; font-weight: 600; }
.name { padding-top: 2px; }
.logo { width: 40px; height: 40px; border-radius: 10px; background: #2563eb; color: #fff; font-size: 20px; font-weight: 700; display: flex; align-items: center; justify-content: center; }
nav { flex: 1; padding-top: 30px; }
nav a { height: 55px; margin-bottom: 5px; display: flex; align-items: center; gap: 19px; padding-left: 34px; border-left: 3px solid transparent; color: #64748b; font-size: 17.500px; }
nav a svg { margin-top: 2px; opacity: .85; }
nav a.on { border-color: #2563eb; background: #f3f7ff; color: #2563eb; letter-spacing: .1px; }
.user { height: 116px; display: flex; align-items: flex-start; padding: 20px 0 0 30px; border-top: 1px solid #e2e8f0; }
.avatar { width: 45px; height: 45px; border-radius: 50%; background: #e0e7ff; color: #fff; font: 700 17.500px/45px 'Open Sans', sans-serif; text-align: center; }
.who { width: 140px; margin-left: 12.500px; padding-top: 1px; display: flex; flex-direction: column; align-items: flex-start; }
.who b { font: 600 18.300px/25px 'Open Sans', sans-serif; white-space: nowrap; }
.who small { font-size: 15px; line-height: 14px; color: #64748b; }
.user svg { margin: 20px 0 0 26.500px; }

main { width: 1578px; flex: none; padding: 57px 40px 0; overflow: hidden; }
.head { display: flex; align-items: center; height: 43px; margin-bottom: 56px; }
h1 { flex: 1; font-size: 30px; font-weight: 600; line-height: 40px; padding-bottom: 2px; }
button { font-family: 'Liberation Sans', Arial, sans-serif; padding: 0; }
.btn { height: 43px; display: flex; align-items: center; border-radius: 7px; font-size: 17.500px; padding: 0 0 1px 23px; gap: 9px; white-space: nowrap; }
.btn svg { margin-top: 5px; }
.month { width: 159px; border: 1px solid #e2e8f0; background: #fff; color: #1e293b; }
.add { width: 174px; margin-left: 20px; border: 0; background: #2563eb; color: #fff; }
.card { background: #fff; border: 1px solid #e2e8f0; border-radius: 10px; box-shadow: 0 1px 4px rgba(15, 23, 42, .05); padding: 30px; }
.stats { display: flex; gap: 30px; margin-bottom: 40px; }
.stat { flex: 1; height: 163px; display: flex; justify-content: space-between; }
.stat h3 { font-size: 17.500px; font-weight: 400; line-height: 22px; color: #64748b; }
.stat strong { display: block; font-size: 30px; font-weight: 600; line-height: 44px; }
.stat p { margin-top: 16px; font-size: 15px; line-height: 20px; color: #64748b; }
.stat p.up { color: #10b981; }
.arrow { margin-right: 6px; }
.badge { width: 50px; height: 50px; border-radius: 10px; display: flex; align-items: center; justify-content: center; padding-top: 5px; }
.blue { background: #e9effd; }
.amber { background: #fef4e6; }
.green { background: #e7f8f2; }
.charts { display: flex; gap: 30px; margin-bottom: 40px; }
.charts .card { height: 424px; }
.wide { width: 979px; }
.narrow { width: 489px; }
.charthead { height: 29px; display: flex; justify-content: space-between; align-items: center; }
h2 { font-size: 20px; font-weight: 500; line-height: 24px; }
.periods { display: flex; gap: 10px; }
.periods button { height: 29px; padding: 0 15px; border: 1px solid #e2e8f0; border-radius: 5px; background: #f8fafc; color: #64748b; font-size: 15px; }
.periods button.on { background: #2563eb; border-color: #2563eb; color: #fff; }
.area { height: 313px; margin-top: 20px; padding-bottom: 2px; display: flex; align-items: center; justify-content: center; border: 1px dashed #e2e8f0; border-radius: 6px; font-size: 20px; color: #64748b; }
.recent { height: 200px; display: flex; justify-content: space-between; align-items: flex-start; }
.recent h2 { line-height: 43px; }
.viewall { width: 109px; height: 43px; border: 1px solid #e2e8f0; border-radius: 8px; background: #fff; color: #1e293b; font: 500 17.500px Inter, sans-serif; }
.scroll { width: 19px; flex: none; background: #fcfcfc; display: flex; flex-direction: column; align-items: center; padding: 10px 0 9px; }
.scroll i { width: 11px; height: 720px; margin-top: 9px; border-radius: 6px; background: #8a8a8a; }
.dn { margin-top: auto; transform: rotate(180deg); }

.taskbar { height: 60px; flex: none; display: flex; align-items: center; border-top: 1px solid #a9b4bb; background: linear-gradient(90deg, #cfe4ef 0%, #cfe3ee 28%, #d5e1f0 36%, #d9dce6 46%, #d5dcea 56%, #cfdfe9 72%, #d2dfeb 85%, #d0dde8 100%); }
.weather { width: 585px; display: flex; align-items: center; padding-left: 28px; gap: 12px; margin-top: -3px; }
.weather div, .clock { display: flex; flex-direction: column; font-size: 14.600px; line-height: 20px; }
.weather .sub { color: #555d63; font-size: 15.800px; direction: rtl; }
.start { margin-left: 27.500px; }
.search { width: 274px; height: 39px; margin-left: 16.500px; display: flex; align-items: center; padding-left: 14px; border: 1px solid #c4ccd8; border-radius: 20px; background: linear-gradient(90deg, #f2f7fc, #f4f3f5 60%, #eff2f8); color: #555; }
.search span { margin-left: 12px; font-size: 16.600px; line-height: 24px; margin-top: -1px; color: #555; }
.bird { margin-left: auto; margin-right: 4px; }
.tv { margin-left: 16px; }
.fold { margin-left: 25px; }
.edge { width: 48px; height: 50px; margin-left: 15px; display: flex; flex-direction: column; align-items: center; padding-top: 9px; border: 1px solid #d0d3da; border-radius: 6px; background: #eceef2; box-shadow: inset -4px 0 #dfe2e9; }
.edge svg { margin-left: -1px; }
.edge i { width: 20px; height: 4px; margin: 5px 1px 0 0; border-radius: 2px; background: #0078d4; }
.store { margin-left: 16px; }
.teams { margin-left: 25px; }
.app { height: 50px; margin-left: 24px; padding-top: 10px; display: flex; flex-direction: column; align-items: center; }
.app i { width: 8px; height: 4px; margin-top: 4px; border-radius: 2px; background: #7b8085; }
.docker { margin-left: 25px; }
.tray { margin-left: auto; display: flex; align-items: center; padding-right: 24px; color: #1a1a1a; }
.cloud { margin-left: 23px; }
.eng { margin-left: 22px; margin-right: 1px; font-size: 14.800px; line-height: 20px; margin-top: -2px; }
.wifi { margin-left: 21px; margin-top: -3px; }
.vol { margin-left: 10px; margin-top: -2px; }
.bat { margin-left: 10px; margin-top: -1px; }
.clock { margin-left: 20.500px; align-items: flex-end; font-size: 14.700px; margin-top: -3px; }
</style>
